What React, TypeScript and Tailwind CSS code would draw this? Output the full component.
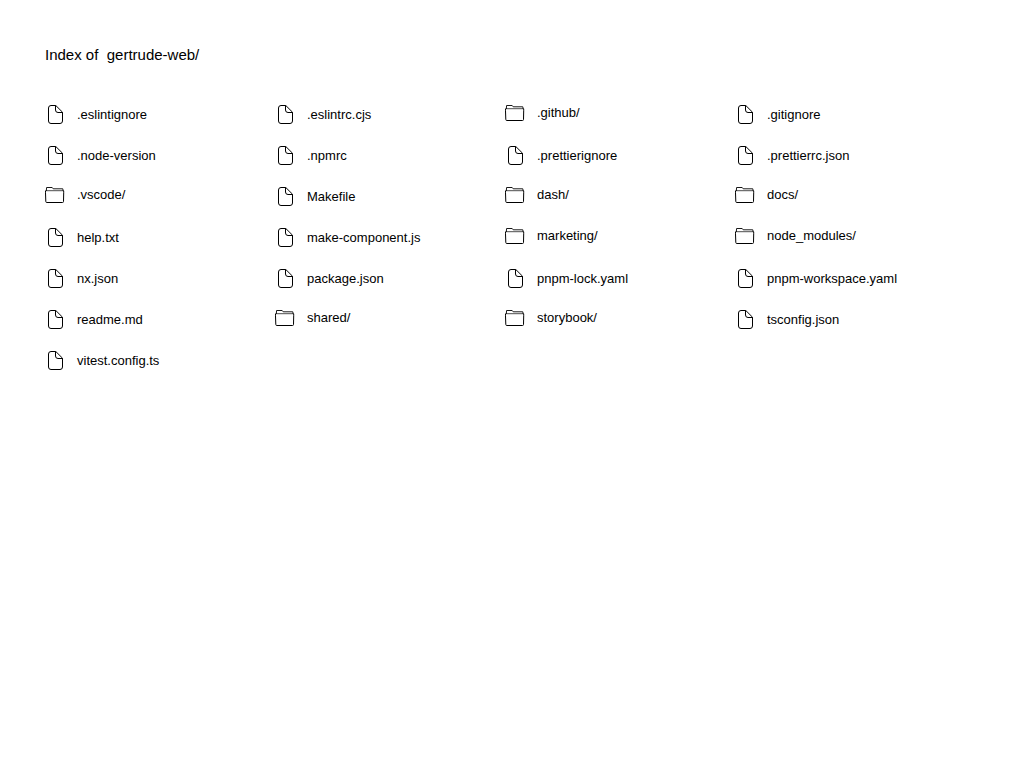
const entries = [
  ".eslintignore", ".eslintrc.cjs", ".github/", ".gitignore",
  ".node-version", ".npmrc", ".prettierignore", ".prettierrc.json",
  ".vscode/", "Makefile", "dash/", "docs/",
  "help.txt", "make-component.js", "marketing/", "node_modules/",
  "nx.json", "package.json", "pnpm-lock.yaml", "pnpm-workspace.yaml",
  "readme.md", "shared/", "storybook/", "tsconfig.json",
  "vitest.config.ts",
];

function FileIcon() {
  return (
    <svg className="ml-[3px] h-[19px] w-4" viewBox="0 0 16 19" fill="none" stroke="#000" aria-hidden="true">
      <path d="M7.8.5H3A2.5 2.5 0 0 0 .5 3v13A2.5 2.5 0 0 0 3 18.5h9a2.5 2.5 0 0 0 2.5-2.5V7.2Z" />
      <path d="M7.5.5V5A2.5 2.5 0 0 0 10 7.5h4.5" />
    </svg>
  );
}

function FolderIcon() {
  return (
    <svg className="h-4 w-5" viewBox="0 0 20 16" fill="none" stroke="#000" aria-hidden="true">
      <path strokeWidth=".9" d="M1.3 4 1.6.5h5.6l1 1.3h9.6l.4 2.2" />
      <path strokeWidth=".7" d="M.5 3.7h18.2" />
      <path d="M.5 3.8v2l.3 8.7q0 1 1 1h15.7q1 0 1-1l.2-8.7v-2" />
    </svg>
  );
}

export default function App() {
  return (
    <main className="min-h-screen bg-white px-[45px] pt-[45px] font-['Liberation_Sans',Arial,sans-serif] text-black">
      <h1 className="text-[15px] leading-5">
        Index of &nbsp;<a href="#">gertrude-web/</a>
      </h1>
      <ul className="mt-[39px] grid grid-cols-[repeat(auto-fill,230px)]">
        {entries.map((name) => {
          const folder = name.endsWith("/");
          return (
            <li key={name} className="h-[41px]">
              <a href={"#" + name} className={folder ? "flex h-[18px] items-center text-[13px]" : "flex h-[21px] items-center text-[13px]"}>
                <span className="w-8">{folder ? <FolderIcon /> : <FileIcon />}</span>
                <span>{name}</span>
              </a>
            </li>
          );
        })}
      </ul>
    </main>
  );
}
